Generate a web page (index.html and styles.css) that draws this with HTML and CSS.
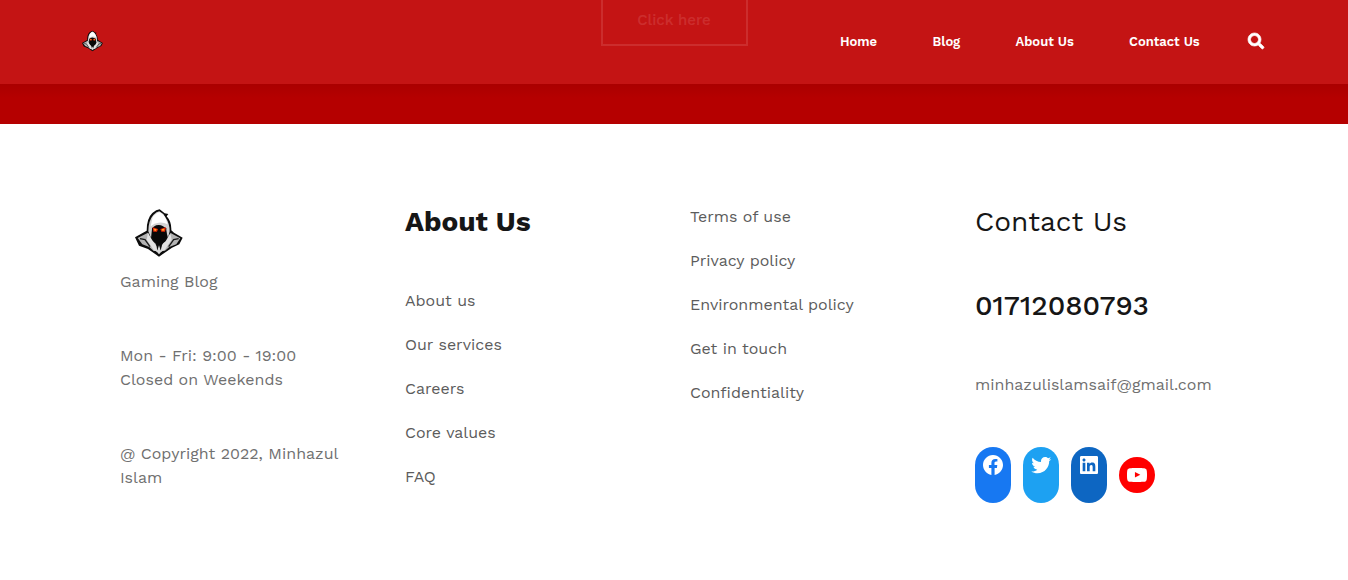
FILE: index.html
```html
<!DOCTYPE html>
<html lang="en">
<head>
<meta charset="utf-8">
<title>Gaming Blog</title>
<link rel="stylesheet" href="styles.css">
</head>
<body>
<svg width="0" height="0" class="defs" aria-hidden="true">
  <symbol id="reaper" viewBox="45 27 144 144">
    <path fill="#0c0c0c" d="M45 112 80 92Q80 55 97 39 109 29 119 28L134 40 145 42 140 49Q155 65 154 91L162 98 188 113 178 133 156 143 117 170 84 147 57 137Z"/>
    <path fill="#d2d2d2" d="M85 94Q85 62 100 45 110 35 118 34 131 40 137 53 149 70 149 94L144 114 137 86Q128 74 115 75 101 76 96 87L93 114Z"/>
    <path fill="#fff" d="M98 51Q110 37 119 37 132 43 138 58L143 73Q130 66 116 68 103 69 92 79Z"/>
    <path fill="#b4b4b4" d="M53 114 84 98 91 117 107 131 112 153 101 153 88 141 67 133Z"/>
    <path fill="#b4b4b4" d="M181 115 152 99 145 119 129 130 122 153 135 152 148 141 169 133Z"/>
    <path fill="#e2e2e2" d="M84 98 98 123 109 137 112 156 101 150 80 119ZM151 99 137 124 126 135 122 156 134 150 155 119Z"/>
    <path fill="none" stroke="#1a1a1a" stroke-width="4" d="M60 116 75 119 90 140M176 116 161 119 146 140"/>
    <path fill="#080808" d="M96 84 116 79 139 84 139 110 129 127 117 135 105 126 96 110Z"/>
    <path fill="#e52708" d="M98 82 114 87 111 95 100 95ZM138 82 121 87 124 95 135 95Z"/>
    <path fill="#ffac20" d="M103 86 110 88 107 93 102 91ZM132 86 125 88 128 93 133 91Z"/>
    <path fill="#d8d8d8" d="M104 148 117 163 131 148 122 151 117 136 112 151Z"/>
  </symbol>
</svg>
<header class="header">
  <svg class="header-logo"><use href="#reaper"/></svg>
  <nav class="nav">
    <a class="nav-home">Home</a><a class="nav-blog">Blog</a><a class="nav-about">About Us</a><a class="nav-contact">Contact Us</a>
    <svg class="search" viewBox="0 0 512 512"><path fill="#fff" stroke="#fff" stroke-width="22" d="M505 442.700 405.300 343c-4.500-4.500-10.600-7-17-7H372c27.600-35.300 44-79.700 44-128C416 93.100 322.900 0 208 0S0 93.100 0 208s93.100 208 208 208c48.300 0 92.700-16.400 128-44v16.300c0 6.400 2.500 12.500 7 17l99.700 99.700c9.400 9.400 24.600 9.400 33.900 0l28.300-28.300c9.400-9.400 9.400-24.600.1-34zM208 336c-70.700 0-128-57.200-128-128 0-70.700 57.200-128 128-128 70.700 0 128 57.200 128 128 0 70.700-57.200 128-128 128z"/></svg>
  </nav>
</header>
<section class="banner"><a class="cta">Click here</a></section>
<footer class="footer">
  <div class="col brand">
    <svg class="logo"><use href="#reaper"/></svg>
    <p>Gaming Blog</p>
    <p>Mon - Fri: 9:00 - 19:00<br>Closed on Weekends</p>
    <p>@ Copyright 2022, Minhazul Islam</p>
  </div>
  <div class="col">
    <h2 class="bold">About Us</h2>
    <ul class="links">
      <li>About us</li><li>Our services</li><li>Careers</li><li>Core values</li><li>FAQ</li>
    </ul>
  </div>
  <div class="col">
    <ul class="links">
      <li>Terms of use</li><li>Privacy policy</li><li>Environmental policy</li><li>Get in touch</li><li>Confidentiality</li>
    </ul>
  </div>
  <div class="col">
    <h2>Contact Us</h2>
    <h2 class="phone">01712080793</h2>
    <p class="mail">minhazulislamsaif@gmail.com</p>
    <div class="social">
      <a class="pill facebook"><svg viewBox="0 0 24 24"><path d="M12 2C6.5 2 2 6.5 2 12c0 5 3.7 9.1 8.4 9.900v-7H7.900V12h2.500V9.800c0-2.500 1.500-3.900 3.800-3.900 1.100 0 2.200.2 2.200.2v2.500h-1.300c-1.200 0-1.600.8-1.600 1.600V12h2.800l-.4 2.900h-2.300v7C18.300 21.100 22 17 22 12c0-5.500-4.500-10-10-10z"/></svg></a>
      <a class="pill twitter"><svg viewBox="0 0 24 24"><path d="M22.23,5.924c-0.736,0.326-1.527,0.547-2.357,0.646c0.847-0.508,1.498-1.312,1.804-2.27c-0.793,0.47-1.671,0.812-2.606,0.996C18.324,4.498,17.257,4,16.077,4c-2.266,0-4.103,1.837-4.103,4.103c0,0.322,0.036,0.635,0.106,0.935C8.67,8.867,5.647,7.234,3.623,4.751C3.27,5.357,3.067,6.062,3.067,6.814c0,1.424,0.724,2.679,1.825,3.415c-0.673-0.021-1.305-0.206-1.859-0.513c0,0.017,0,0.034,0,0.052c0,1.988,1.414,3.647,3.292,4.023c-0.344,0.094-0.707,0.144-1.081,0.144c-0.264,0-0.521-0.026-0.772-0.074c0.522,1.63,2.038,2.816,3.833,2.85c-1.404,1.1-3.174,1.756-5.096,1.756c-0.331,0-0.658-0.019-0.979-0.057c1.816,1.164,3.973,1.843,6.29,1.843c7.547,0,11.675-6.252,11.675-11.675c0-0.178-0.004-0.355-0.012-0.531C20.985,7.47,21.68,6.747,22.23,5.924z"/></svg></a>
      <a class="pill linkedin"><svg viewBox="0 0 24 24"><path d="M19.7,3H4.3C3.582,3,3,3.582,3,4.3v15.4C3,20.418,3.582,21,4.3,21h15.4c0.718,0,1.3-0.582,1.3-1.3V4.3C21,3.582,20.418,3,19.7,3z M8.339,18.338H5.667v-8.59h2.672V18.338z M7.004,8.574c-0.857,0-1.549-0.694-1.549-1.548c0-0.855,0.691-1.548,1.549-1.548c0.854,0,1.547,0.694,1.547,1.548C8.551,7.881,7.858,8.574,7.004,8.574z M18.339,18.338h-2.669v-4.177c0-0.996-0.017-2.278-1.387-2.278c-1.389,0-1.601,1.086-1.601,2.206v4.249h-2.667v-8.59h2.559v1.174h0.037c0.356-0.675,1.227-1.387,2.526-1.387c2.703,0,3.203,1.779,3.203,4.092V18.338z"/></svg></a>
      <a class="pill youtube"><svg viewBox="0 0 24 24"><path d="M21.8,8.001c0,0-0.195-1.378-0.795-1.985c-0.76-0.797-1.613-0.801-2.004-0.847c-2.799-0.202-6.997-0.202-6.997-0.202h-0.009c0,0-4.198,0-6.997,0.202C4.608,5.216,3.756,5.22,2.995,6.016C2.395,6.623,2.2,8.001,2.2,8.001S2,9.62,2,11.238v1.517c0,1.618,0.2,3.237,0.2,3.237s0.195,1.378,0.795,1.985c0.761,0.797,1.76,0.771,2.205,0.855c1.6,0.153,6.8,0.201,6.8,0.201s4.203-0.006,7.001-0.209c0.391-0.047,1.243-0.051,2.004-0.847c0.6-0.607,0.795-1.985,0.795-1.985s0.2-1.618,0.2-3.237v-1.517C22,9.62,21.8,8.001,21.8,8.001z M9.935,14.594l-0.001-5.62l5.404,2.82L9.935,14.594z"/></svg></a>
    </div>
  </div>
</footer>
</body>
</html>
```

FILE: styles.css
```css
* { box-sizing: border-box; margin: 0; padding: 0; }
body {
  font: 400 16px/24px "Work Sans", Inter, sans-serif;
  color: #5c5c5c;
  background: #fff;
  height: 580px;
  overflow: hidden;
}
svg { display: block; flex: none; }
.defs { position: absolute; }
.header {
  position: absolute;
  z-index: 2;
  inset: 0 0 auto;
  height: 84px;
  padding: 0 84px 0 82px;
  display: flex;
  align-items: center;
  justify-content: space-between;
  background: rgba(199, 22, 22, 0.9);
}
.header-logo { width: 21px; height: 22px; margin-top: -2px; }
.nav { display: flex; align-items: center; color: #fff; font-size: 13px; font-weight: 600; }
.nav a { white-space: nowrap; }
.nav-home { width: 92.5px; }
.nav-blog { width: 83px; }
.nav-about { width: 113.5px; }
.nav-contact { width: 118.5px; }
.search { width: 16px; height: 16px; margin: -3px 0.5px 0 0; overflow: visible; }
.banner {
  height: 124px;
  display: flex;
  justify-content: center;
  align-items: flex-start;
  background: linear-gradient(#aa0000 84px, #b50000 98px);
}
.cta {
  width: 147px;
  height: 46px;
  border: 2px solid #fff;
  border-top: 0;
  color: #fff;
  font-size: 15px;
  font-weight: 500;
  line-height: 40px;
  text-align: center;
}
.footer {
  padding: 81px 120px 0;
  display: grid;
  grid-template-columns: repeat(4, 253px);
  column-gap: 32px;
}
.col { display: flex; flex-direction: column; gap: 50px; }
.logo { width: 48px; height: 48px; margin: 4px 0 -37px 15px; }
.brand, .mail { color: #707070; }
h2 { font-size: 28px; line-height: 34px; font-weight: 400; color: #161616; }
h2.bold { font-weight: 700; }
h2.phone { font-weight: 500; }
.links { display: flex; flex-direction: column; gap: 20px; list-style: none; }
.social { display: flex; align-items: center; gap: 12px; }
.pill { width: 36px; height: 56px; padding: 6px; border-radius: 18px; }
.pill svg { width: 24px; height: 24px; fill: #fff; }
.facebook { background: #1778f2; }
.twitter { background: #1da1f2; }
.linkedin { background: #0d66c2; }
.youtube { height: 36px; background: #f00; }
```
